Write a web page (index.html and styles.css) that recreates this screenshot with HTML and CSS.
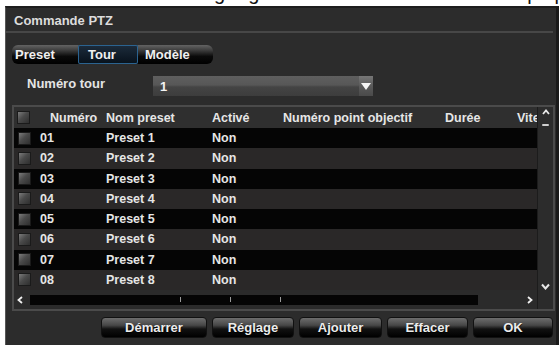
FILE: index.html
```
<!DOCTYPE html>
<html lang="fr">
<head>
    <meta charset="UTF-8">
    <title>Commande PTZ</title>
    <link rel="stylesheet" href="styles.css">
</head>
<body>
<div class="page">
    <div class="clip">
        <div class="clip-line"><span class="c1">g</span><span class="c2">g</span><span class="c3">p</span><span class="c4">p</span></div>
    </div>

    <div class="dialog">
        <div class="title">Commande PTZ</div>

        <div class="tabs">
            <div class="tab tab-preset">Preset</div>
            <div class="tab tab-tour active">Tour</div>
            <div class="tab tab-model">Modèle</div>
        </div>

        <div class="field">
            <div class="field-label">Numéro tour</div>
            <div class="select">
                <span class="select-value">1</span>
                <span class="select-arrow"><svg width="10" height="7" viewBox="0 0 10 7"><polygon points="0,0 10,0 5,7" fill="#f4f4f4"/></svg></span>
            </div>
        </div>

        <div class="table">
            <div class="table-main">
                <div class="grid">
                    <div class="row head">
                        <div class="cell c-chk"><span class="chk"></span></div>
                        <div class="cell c-num">Numéro</div>
                        <div class="cell c-name">Nom preset</div>
                        <div class="cell c-act">Activé</div>
                        <div class="cell c-point">Numéro point objectif</div>
                        <div class="cell c-dur">Durée</div>
                        <div class="cell c-speed">Vitesse</div>
                    </div>
                    <div class="row dark">
                        <div class="cell c-chk"><span class="chk"></span></div>
                        <div class="cell c-num">01</div>
                        <div class="cell c-name">Preset 1</div>
                        <div class="cell c-act">Non</div>
                    </div>
                    <div class="row">
                        <div class="cell c-chk"><span class="chk"></span></div>
                        <div class="cell c-num">02</div>
                        <div class="cell c-name">Preset 2</div>
                        <div class="cell c-act">Non</div>
                    </div>
                    <div class="row dark">
                        <div class="cell c-chk"><span class="chk"></span></div>
                        <div class="cell c-num">03</div>
                        <div class="cell c-name">Preset 3</div>
                        <div class="cell c-act">Non</div>
                    </div>
                    <div class="row">
                        <div class="cell c-chk"><span class="chk"></span></div>
                        <div class="cell c-num">04</div>
                        <div class="cell c-name">Preset 4</div>
                        <div class="cell c-act">Non</div>
                    </div>
                    <div class="row dark">
                        <div class="cell c-chk"><span class="chk"></span></div>
                        <div class="cell c-num">05</div>
                        <div class="cell c-name">Preset 5</div>
                        <div class="cell c-act">Non</div>
                    </div>
                    <div class="row">
                        <div class="cell c-chk"><span class="chk"></span></div>
                        <div class="cell c-num">06</div>
                        <div class="cell c-name">Preset 6</div>
                        <div class="cell c-act">Non</div>
                    </div>
                    <div class="row dark">
                        <div class="cell c-chk"><span class="chk"></span></div>
                        <div class="cell c-num">07</div>
                        <div class="cell c-name">Preset 7</div>
                        <div class="cell c-act">Non</div>
                    </div>
                    <div class="row">
                        <div class="cell c-chk"><span class="chk"></span></div>
                        <div class="cell c-num">08</div>
                        <div class="cell c-name">Preset 8</div>
                        <div class="cell c-act">Non</div>
                    </div>
                </div>
                <div class="vscroll">
                    <svg class="v-up" width="8" height="6" viewBox="0 0 8 6"><polyline points="1,5 4,1.5 7,5" fill="none" stroke="#e8e8e8" stroke-width="1.8"/></svg>
                    <span class="v-thumb"></span>
                    <svg class="v-down" width="9" height="7" viewBox="0 0 9 7"><polyline points="1,1.5 4.5,5.5 8,1.5" fill="none" stroke="#e8e8e8" stroke-width="2"/></svg>
                </div>
            </div>
            <div class="hscroll">
                <div class="h-left"><svg width="6" height="8" viewBox="0 0 6 8"><polyline points="5,1 1.5,4 5,7" fill="none" stroke="#f0f0f0" stroke-width="1.8"/></svg></div>
                <div class="h-track"><span class="tick t1"></span><span class="tick"></span><span class="tick"></span></div>
                <div class="h-right"><svg width="6" height="8" viewBox="0 0 6 8"><polyline points="1,1 4.5,4 1,7" fill="none" stroke="#f0f0f0" stroke-width="1.8"/></svg></div>
                <div class="h-corner"></div>
            </div>
        </div>

        <div class="buttons">
            <button class="btn b-start">Démarrer</button>
            <button class="btn b-set">Réglage</button>
            <button class="btn b-add">Ajouter</button>
            <button class="btn b-del">Effacer</button>
            <button class="btn b-ok">OK</button>
        </div>
    </div>
</div>
</body>
</html>
```

FILE: styles.css
```
body {
    margin: 0;
    background: #ffffff;
    font-family: "Liberation Sans", Arial, sans-serif;
}
.page {
    width: 559px;
    height: 345px;
    display: flex;
    flex-direction: column;
}

/* bit of the document text above the capture */
.clip {
    height: 6px;
    overflow: hidden;
    flex: none;
}
.clip-line {
    display: flex;
    font-size: 20px;
    line-height: 20px;
    margin-top: -17px;
    color: #111;
}
.c1 { margin-left: 214px; }
.c2 { margin-left: 23px; }
.c3 { margin-left: 268px; }
.c4 { margin-left: 16px; }

.dialog {
    flex: 1;
    margin-left: 5px;
    background: #2c2c2c;
    border-left: 1px solid #575757;
    border-top: 2px solid #1d1d1d;
    border-right: 3px solid #1a1a1a;
    display: flex;
    flex-direction: column;
    color: #e4e4e4;
    font-weight: bold;
}
.title {
    height: 20px;
    padding: 3px 0 0 8px;
    margin-right: 3px;
    font-size: 13px;
    line-height: 20px;
    border-bottom: 2px solid #474747;
    color: #dcdcdc;
}

/* tabs */
.tabs {
    display: flex;
    width: 201px;
    height: 19px;
    margin: 12px 0 0 6px;
    border-radius: 6px;
    background: linear-gradient(to bottom, #636363 0%, #3a3a3a 30%, #0a0a0a 60%, #000 100%);
}
.tab {
    font-size: 13px;
    line-height: 19px;
    color: #f0f0f0;
    box-sizing: border-box;
}
.tab-preset { width: 66px; padding-left: 3px; }
.tab-tour { width: 60px; padding-left: 10px; }
.tab-model { width: 75px; padding-left: 7px; }
.tab.active {
    background: linear-gradient(to bottom, #1d2c3c, #07111b);
    box-shadow: inset 0 0 0 1px #2b6390;
    border-radius: 2px;
}

/* numero tour */
.field {
    display: flex;
    margin: 12px 0 0 21px;
    height: 20px;
}
.field-label {
    width: 126px;
    font-size: 13px;
    line-height: 16px;
}
.select {
    width: 220px;
    height: 20px;
    display: flex;
    justify-content: space-between;
    background: linear-gradient(to bottom, #5f5f5f 0%, #575757 45%, #444 55%, #3d3d3d 100%);
}
.select-value {
    padding-left: 7px;
    font-size: 13px;
    line-height: 21px;
    color: #f4f4f4;
}
.select-arrow {
    width: 14px;
    display: flex;
    align-items: center;
    justify-content: center;
    background: linear-gradient(to bottom, #777 0%, #5a5a5a 50%, #4a4a4a 100%);
}

/* table */
.table {
    margin: 9px 1px 0 6px;
    border: 2px solid #4b4b4b;
}
.table-main {
    display: flex;
}
.grid {
    flex: 1;
    display: flex;
    flex-direction: column;
}
.row {
    display: flex;
    height: 20.25px;
    align-items: center;
    background: #2a2828;
    font-size: 12.5px;
    color: #e6e6e6;
}
.row.dark {
    background: #050505;
}
.row.head {
    height: 21px;
    background: #2f2f2f;
}
.cell {
    box-sizing: border-box;
    padding-left: 2px;
    white-space: nowrap;
    overflow: hidden;
}
.c-chk { width: 24px; padding-left: 4px; display: flex; }
.c-num { width: 66px; }
.head .c-num { padding-left: 12px; }
.head .c-chk { padding-left: 3px; }
.c-name { width: 106px; }
.c-act { width: 71px; }
.c-point { width: 162px; }
.c-dur { width: 70px; }
.c-speed { width: 24px; padding-left: 4px; }
.chk {
    width: 11px;
    height: 11px;
    border: 1px solid #1a1a1a;
    background: linear-gradient(135deg, #7c7c7c 0%, #4a4a4a 45%, #2e2e2e 100%);
}

.vscroll {
    width: 16px;
    display: flex;
    flex-direction: column;
    align-items: center;
    background: #2c2c2c;
    border-left: 1px solid #1c1c1c;
}
.v-up { margin-top: 2px; }
.v-thumb {
    width: 7px;
    height: 2px;
    margin-top: 9px;
    background: #cfcfcf;
    border-radius: 1px;
}
.v-down { margin-top: auto; margin-bottom: 0; }

.hscroll {
    display: flex;
    height: 19px;
    align-items: center;
    background: #2b2b2b;
}
.h-left {
    width: 16px;
    display: flex;
    padding-left: 3px;
    box-sizing: border-box;
}
.h-track {
    width: 448px;
    height: 10px;
    display: flex;
    align-items: center;
    background: #050505;
}
.tick {
    width: 1px;
    height: 5px;
    margin-left: 49px;
    background: #9a9a9a;
}
.tick.t1 { margin-left: 150px; }
.h-right {
    flex: 1;
    display: flex;
    justify-content: flex-end;
    padding-right: 4px;
}
.h-corner {
    width: 16px;
    height: 19px;
    border-left: 1px solid #1c1c1c;
    box-sizing: border-box;
}

/* buttons */
.buttons {
    display: flex;
    justify-content: flex-end;
    gap: 5px;
    margin-top: 6px;
    padding-right: 3px;
}
.btn {
    height: 21px;
    padding: 0;
    font-family: "Liberation Sans", Arial, sans-serif;
    font-size: 13px;
    font-weight: bold;
    color: #ececec;
    text-shadow: 0 1px 1px #000;
    border: 1px solid #111;
    border-radius: 4px;
    background: linear-gradient(to bottom, #6d6d6d 0%, #474747 38%, #111 58%, #000 100%);
}
.b-start { width: 106px; }
.b-set { width: 82px; }
.b-add { width: 83px; }
.b-del { width: 81px; }
.b-ok { width: 80px; }
```
